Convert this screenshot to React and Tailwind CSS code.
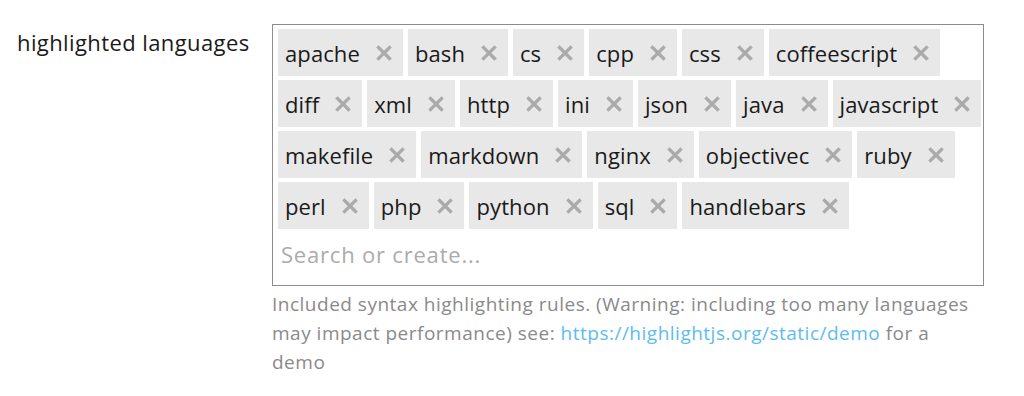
import { useState } from 'react';

const initialLanguages = [
    'apache', 'bash', 'cs', 'cpp', 'css', 'coffeescript',
    'diff', 'xml', 'http', 'ini', 'json', 'java', 'javascript',
    'makefile', 'markdown', 'nginx', 'objectivec', 'ruby',
    'perl', 'php', 'python', 'sql', 'handlebars',
];

function RemoveIcon() {
    return (
        <svg width="16" height="16" viewBox="0 0 16 16" className="shrink-0">
            <path d="M2.5 2.5 L13.5 13.5 M13.5 2.5 L2.5 13.5" stroke="#aaaaaa" strokeWidth="3.2" strokeLinecap="square" />
        </svg>
    );
}

function Tag({ label, onRemove }) {
    return (
        <div className="flex h-[47px] items-center bg-[#e8e8e8] pl-[7px] pr-[11px]">
            <span className="text-[22px] leading-none tracking-[0.1px] text-[#1a1a1a]">{label}</span>
            <button onClick={onRemove} className="ml-[16px] flex items-center">
                <RemoveIcon />
            </button>
        </div>
    );
}

export default function App() {
    const [languages, setLanguages] = useState(initialLanguages);
    const [query, setQuery] = useState('');

    const removeLanguage = (lang) => {
        setLanguages(languages.filter(l => l !== lang));
    };

    return (
        <div className="flex bg-white pt-[24px] pl-[17px]" style={{ fontFamily: '"Open Sans", sans-serif' }}>
            <label className="w-[255px] shrink-0 pt-[4px] text-[22px] leading-[28px] tracking-[0.4px] text-[#1a1a1a]">
                highlighted languages
            </label>
            <div className="w-[712px]">
                <div className="border border-[#8c8c8c] pl-[5px] pr-[1px] pt-[4px]">
                    <div className="flex flex-wrap gap-x-[5px] gap-y-[4px]">
                        {languages.map(lang => (
                            <Tag key={lang} label={lang} onRemove={() => removeLanguage(lang)} />
                        ))}
                    </div>
                    <input
                        value={query}
                        onChange={e => setQuery(e.target.value)}
                        placeholder="Search or create..."
                        className="h-[56px] w-full pl-[3px] pb-[6px] text-[22px] tracking-[0.8px] text-[#1a1a1a] outline-none placeholder:text-[#ababab]"
                    />
                </div>
                <p className="mt-[4px] text-[19px] leading-[29px] tracking-[0.5px] text-[#8a8a8a]">
                    Included syntax highlighting rules. (Warning: including too many languages may impact performance) see:{' '}
                    <a href="https://highlightjs.org/static/demo" className="text-[#5cbcf0]">https://highlightjs.org/static/demo</a>{' '}
                    for a demo
                </p>
            </div>
        </div>
    );
}
